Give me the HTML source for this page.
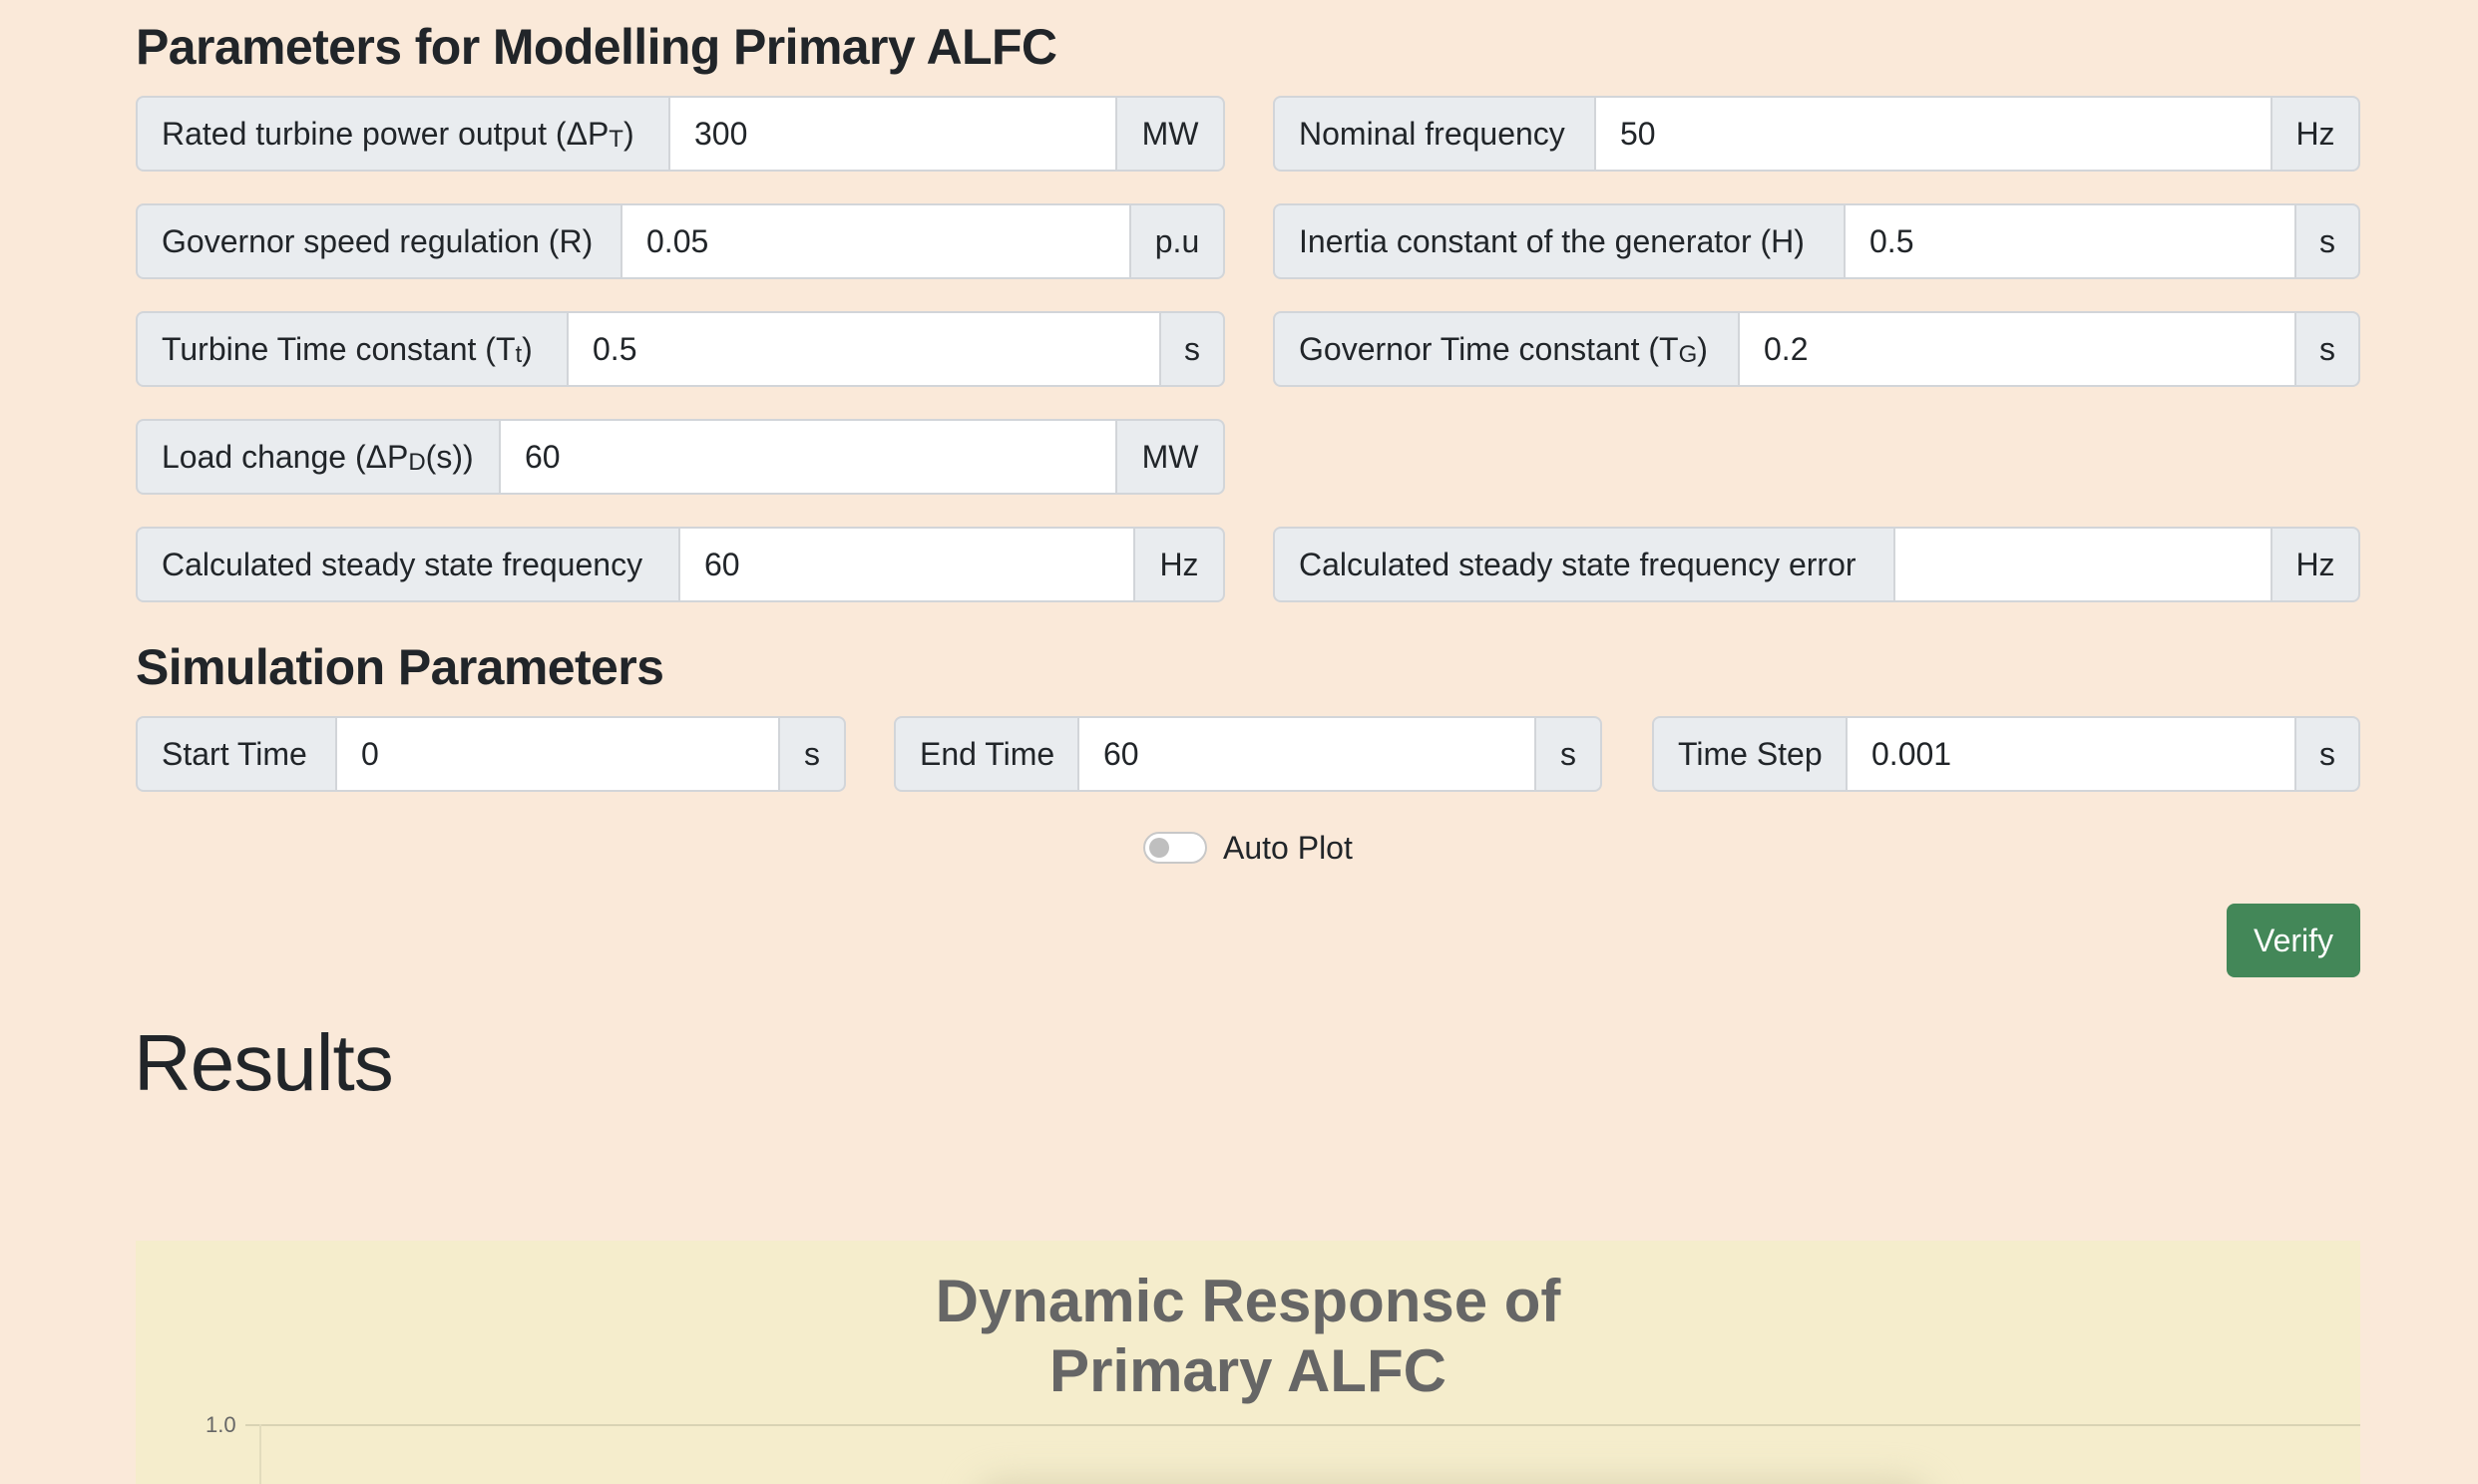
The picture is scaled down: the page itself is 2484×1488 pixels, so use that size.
<!DOCTYPE html>
<html><head><meta charset="utf-8"><style>
html,body{margin:0;padding:0;background:#fae9d9;overflow:hidden}
#w{zoom:2;width:1242px;height:744px;position:relative;font-family:"Liberation Sans",sans-serif;color:#212529;overflow:hidden}
h3{position:absolute;margin:0;font-size:25px;font-weight:bold;left:68px;letter-spacing:-0.3px}
.g{position:absolute;height:38px;display:flex;box-sizing:border-box;font-size:16px}
.g>div{box-sizing:border-box;height:38px;line-height:36px;border:1px solid #d2d5d9;padding:0 12px;white-space:nowrap;overflow:hidden}
.l{background:#e9ecef;border-radius:4px 0 0 4px}
.i{background:#fff;flex:1;border-left:none!important;border-right:none!important}
.u{background:#e9ecef;border-radius:0 4px 4px 0;text-align:center;padding:0!important}
sub{font-size:12px;vertical-align:-1px}
</style></head><body><div id="w">
<h3 style="top:9px">Parameters for Modelling Primary ALFC</h3>

<div class="g" style="left:68px;top:48px;width:546px"><div class="l" style="width:268px">Rated turbine power output (ΔP<sub>T</sub>)</div><div class="i">300</div><div class="u" style="width:55px">MW</div></div>
<div class="g" style="left:638px;top:48px;width:545px"><div class="l" style="width:162px">Nominal frequency</div><div class="i">50</div><div class="u" style="width:45px">Hz</div></div>

<div class="g" style="left:68px;top:102px;width:546px"><div class="l" style="width:244px">Governor speed regulation (R)</div><div class="i">0.05</div><div class="u" style="width:48px">p.u</div></div>
<div class="g" style="left:638px;top:102px;width:545px"><div class="l" style="width:287px">Inertia constant of the generator (H)</div><div class="i">0.5</div><div class="u" style="width:33px">s</div></div>

<div class="g" style="left:68px;top:156px;width:546px"><div class="l" style="width:217px">Turbine Time constant (T<sub>t</sub>)</div><div class="i">0.5</div><div class="u" style="width:33px">s</div></div>
<div class="g" style="left:638px;top:156px;width:545px"><div class="l" style="width:234px">Governor Time constant (T<sub>G</sub>)</div><div class="i">0.2</div><div class="u" style="width:33px">s</div></div>

<div class="g" style="left:68px;top:210px;width:546px"><div class="l" style="width:183px">Load change (ΔP<sub>D</sub>(s))</div><div class="i">60</div><div class="u" style="width:55px">MW</div></div>

<div class="g" style="left:68px;top:264px;width:546px"><div class="l" style="width:273px">Calculated steady state frequency</div><div class="i">60</div><div class="u" style="width:46px">Hz</div></div>
<div class="g" style="left:638px;top:264px;width:545px"><div class="l" style="width:312px">Calculated steady state frequency error</div><div class="i"></div><div class="u" style="width:45px">Hz</div></div>

<h3 style="top:320px">Simulation Parameters</h3>

<div class="g" style="left:68px;top:359px;width:356px"><div class="l" style="width:101px">Start Time</div><div class="i">0</div><div class="u" style="width:34px">s</div></div>
<div class="g" style="left:448px;top:359px;width:355px"><div class="l" style="width:93px">End Time</div><div class="i">60</div><div class="u" style="width:34px">s</div></div>
<div class="g" style="left:828px;top:359px;width:355px"><div class="l" style="width:98px">Time Step</div><div class="i">0.001</div><div class="u" style="width:33px">s</div></div>

<div style="position:absolute;left:573px;top:417px;width:30px;height:14px;border:1px solid #c8c8c8;border-radius:9px;background:#fff"></div>
<div style="position:absolute;left:576px;top:420px;width:10px;height:10px;border-radius:50%;background:#bfbfbf"></div>
<div style="position:absolute;left:613px;top:416px;font-size:16px">Auto Plot</div>

<div style="position:absolute;left:1116px;top:453px;width:67px;height:37px;background:#438758;border-radius:4px;color:#fff;font-size:16px;line-height:37px;text-align:center">Verify</div>

<div style="position:absolute;left:67px;top:510px;font-size:40px;font-weight:500;letter-spacing:-0.5px">Results</div>

<div style="position:absolute;left:68px;top:622px;width:1115px;height:130px;background:#f5edcc">
<div style="position:absolute;left:0;width:100%;top:13px;text-align:center;font-size:30px;font-weight:bold;color:#666;line-height:35px">Dynamic Response of<br>Primary ALFC</div>
<div style="position:absolute;left:55px;top:92px;width:1060px;height:1px;background:#d9d3b4"></div>
<div style="position:absolute;left:62px;top:92px;width:1px;height:40px;background:#e2dcbd"></div>
<div style="position:absolute;left:35px;top:86px;font-size:11px;color:#666">1.0</div>
<div style="position:absolute;left:420px;top:120px;width:480px;height:30px;border-radius:15px;background:#ddd6b5;filter:blur(8px)"></div>
</div>
</div></body></html>
